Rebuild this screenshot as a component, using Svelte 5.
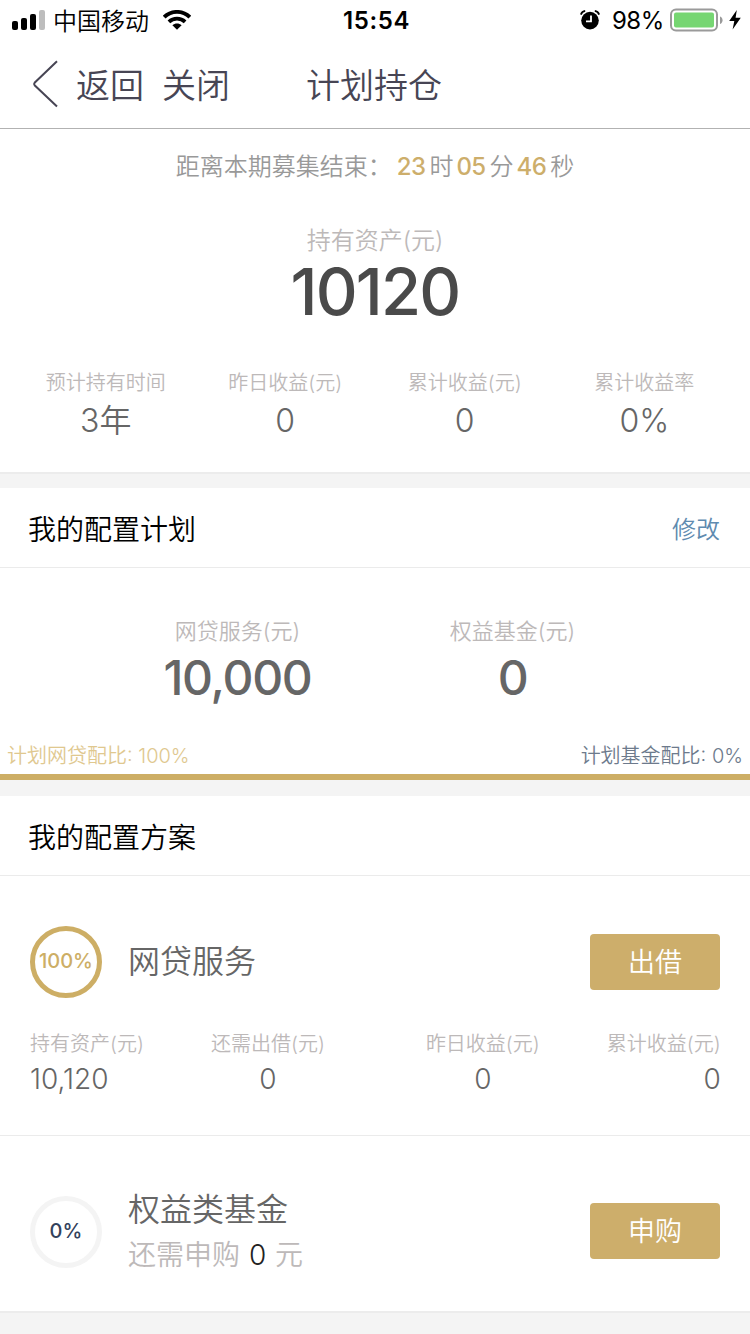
<script>
  const countdown = [
    { value: '23', unit: '时' },
    { value: '05', unit: '分' },
    { value: '46', unit: '秒' }
  ]

  const summary = [
    { label: '预计持有时间', value: '3年' },
    { label: '昨日收益(元)', value: '0' },
    { label: '累计收益(元)', value: '0' },
    { label: '累计收益率', value: '0%' }
  ]

  const plan = [
    { label: '网贷服务(元)', value: '10,000' },
    { label: '权益基金(元)', value: '0' }
  ]

  const loan = [
    { label: '持有资产(元)', value: '10,120' },
    { label: '还需出借(元)', value: '0' },
    { label: '昨日收益(元)', value: '0' },
    { label: '累计收益(元)', value: '0' }
  ]

  let loanRatio = 100
</script>

<div class="page">
  <div class="status">
    <div class="status-left">
      <svg width="34" height="20" viewBox="0 0 34 20">
        <rect x="0" y="11" width="6" height="9" rx="2" />
        <rect x="9" y="8" width="6" height="12" rx="2" />
        <rect x="18" y="4" width="6" height="16" rx="2" />
        <rect x="27" y="0" width="6" height="20" rx="2" fill="#bdbdbd" />
      </svg>
      <span class="carrier">中国移动</span>
      <svg class="wifi" width="28" height="20" viewBox="0 0 28 20">
        <g fill="none" stroke="#000" stroke-width="3.8">
          <path d="M1.2 7.1C8.3 0.1 19.7 0.1 26.8 7.1" />
          <path d="M5.9 11.9C10.4 7.6 17.6 7.6 22.1 11.9" />
        </g>
        <path d="M9.4 15.2C12 13 16 13 18.6 15.2L14 19.8Z" />
      </svg>
    </div>
    <span class="clock">15:54</span>
    <div class="status-right">
      <svg width="20" height="20" viewBox="0 0 20 20">
        <circle cx="10" cy="10.6" r="8.8" />
        <path d="M0.8 4.6C1.6 2.4 3 1.2 5.2 0.9M19.2 4.6C18.4 2.4 17 1.2 14.8 0.9" fill="none" stroke="#000" stroke-width="1.8" />
        <path d="M11 5.5V11.3H6" fill="none" stroke="#fff" stroke-width="1.8" />
      </svg>
      <span class="percent">98%</span>
      <svg class="battery" width="53" height="24" viewBox="0 0 53 24">
        <rect x="1" y="1.5" width="46" height="21" rx="5" fill="none" stroke="#9a9a9a" stroke-width="2" />
        <rect x="4" y="4.5" width="40" height="15" rx="2" fill="#76d672" />
        <path d="M50 8.5C53.4 9.5 53.4 14.9 50 15.9Z" fill="#9a9a9a" />
      </svg>
      <svg class="bolt" width="12" height="20" viewBox="0 0 12 20">
        <path d="M7.8 0L0.2 11H5.3L3.6 19.4L11.8 7.8H6.6Z" />
      </svg>
    </div>
  </div>

  <header class="nav">
    <svg width="27" height="48" viewBox="0 0 27 48">
      <path d="M25 1.2L2.6 22.8Q1.6 24 2.6 25.2L25 46.4" fill="none" stroke="#474554" stroke-width="2" />
    </svg>
    <span class="back">返回</span>
    <span class="close">关闭</span>
    <h1>计划持仓</h1>
  </header>

  <section class="overview">
    <p class="countdown">
      <span class="countdown-label">距离本期募集结束：</span>
      {#each countdown as part}
        <b>{part.value}</b><span class="unit">{part.unit}</span>
      {/each}
    </p>
    <p class="total-label">持有资产(元)</p>
    <p class="total">10120</p>
    <div class="summary">
      {#each summary as item}
        <div>
          <p class="label">{item.label}</p>
          <p class="value">{item.value}</p>
        </div>
      {/each}
    </div>
  </section>

  <section>
    <div class="heading">
      <h2>我的配置计划</h2>
      <span class="edit">修改</span>
    </div>
    <div class="plan">
      {#each plan as item}
        <div>
          <p class="plan-label">{item.label}</p>
          <p class="plan-value">{item.value}</p>
        </div>
      {/each}
    </div>
    <div class="ratio">
      <span class="ratio-loan">计划网贷配比: {loanRatio}%</span>
      <span class="ratio-fund">计划基金配比: {100 - loanRatio}%</span>
    </div>
    <div class="bar"><div class="bar-fill" style:width="{loanRatio}%"></div></div>
  </section>

  <section class="scheme">
    <div class="heading">
      <h2>我的配置方案</h2>
    </div>
    <div class="loan">
      <div class="row">
        <div class="ring full">100%</div>
        <h3>网贷服务</h3>
        <button>出借</button>
      </div>
      <div class="details">
        {#each loan as item}
          <div>
            <p class="label">{item.label}</p>
            <p class="detail-value">{item.value}</p>
          </div>
        {/each}
      </div>
    </div>
    <div class="fund">
      <div class="row">
        <div class="ring">0%</div>
        <div class="fund-text">
          <h3>权益类基金</h3>
          <p>还需申购 <em>0</em> 元</p>
        </div>
        <button>申购</button>
      </div>
    </div>
  </section>
</div>

<style>
  :global(body) {
    background: #f4f4f4;
  }

  .page {
    width: 750px;
    height: 1334px;
    overflow: hidden;
    background: #f4f4f4;
    font-family: Inter, 'Noto Sans CJK SC', sans-serif;
    font-weight: 350;
    color: #666;
  }

  p, h1, h2, h3 {
    margin: 0;
    font-weight: 350;
    white-space: nowrap;
  }

  section {
    background: #fff;
    margin-bottom: 16px;
  }

  .status {
    display: grid;
    grid-template-columns: 1fr auto 1fr;
    align-items: center;
    height: 40px;
    padding: 0 9px 0 12px;
    background: #fff;
    color: #000;
  }

  .status-left, .status-right {
    display: flex;
    align-items: center;
  }

  .status-right {
    justify-content: flex-end;
  }

  .carrier {
    margin-left: 7px;
    padding-top: 3px;
    font-size: 24px;
    line-height: 37px;
  }

  .wifi {
    margin-left: 14px;
  }

  .clock {
    padding-top: 1px;
    font-size: 24px;
    font-weight: 600;
    letter-spacing: 0.6px;
  }

  .percent {
    margin: 0 6px 0 12px;
    padding-top: 1px;
    font-size: 24px;
    font-weight: 400;
    letter-spacing: -0.4px;
  }

  .bolt {
    margin-left: 6px;
  }

  .nav {
    display: flex;
    align-items: center;
    height: 88px;
    padding-left: 32px;
    border-bottom: 1px solid #b2b2b2;
    background: #fff;
    color: #474554;
    font-size: 34px;
    line-height: 84px;
  }

  .nav span, h1 {
    padding-top: 4px;
  }

  .back {
    margin-left: 17px;
  }

  .close {
    margin-left: 18px;
  }

  h1 {
    margin-left: 76px;
    font-size: 34px;
  }

  .overview {
    height: 343px;
    border-bottom: 2px solid #ececec;
    margin-bottom: 14px;
    text-align: center;
  }

  .countdown {
    display: flex;
    justify-content: center;
    padding-top: 20px;
    font-size: 24px;
    line-height: 36px;
    color: #999;
  }

  .countdown-label {
    margin-right: 5px;
  }

  .countdown b {
    font-weight: 500;
    color: #cdae6b;
    letter-spacing: -0.6px;
  }

  .unit {
    margin: 0 3px 0 4px;
  }

  .unit:last-child {
    margin-right: 0;
  }

  .total-label {
    padding-top: 40px;
    font-size: 24px;
    line-height: 32px;
    color: #bdb9b9;
  }

  .total {
    padding-top: 2px;
    font-size: 65px;
    font-weight: 500;
    line-height: 66px;
    letter-spacing: -1.8px;
    color: #4a4a4a;
  }

  .summary {
    display: grid;
    grid-template-columns: repeat(4, 1fr);
    padding: 43px 16px 0;
  }

  .label {
    font-size: 20px;
    line-height: 30px;
    color: #bdb9b9;
  }

  .value {
    font-size: 32px;
    line-height: 46px;
  }

  .heading {
    display: flex;
    justify-content: space-between;
    align-items: center;
    height: 79px;
    padding: 0 30px 0 28px;
    border-bottom: 1px solid #ebebeb;
  }

  h2 {
    font-size: 28px;
    color: #000;
  }

  .edit {
    font-size: 24px;
    color: #5f8bb0;
  }

  .plan {
    display: grid;
    grid-template-columns: 275px 275px;
    justify-content: center;
    height: 171px;
    box-sizing: border-box;
    padding-top: 46px;
    text-align: center;
  }

  .plan-label {
    font-size: 22px;
    line-height: 34px;
    color: #bdb9b9;
  }

  .plan-value {
    padding-top: 1px;
    font-size: 48px;
    font-weight: 500;
    line-height: 58px;
    letter-spacing: -1.3px;
  }

  .ratio {
    display: flex;
    justify-content: space-between;
    height: 35px;
    padding: 0 7px;
    font-size: 20px;
    line-height: 34px;
  }

  .ratio-loan {
    color: #e0c88f;
  }

  .ratio-fund {
    color: #6d7a8c;
  }

  .bar {
    height: 6px;
    background: #f4f4f4;
  }

  .bar-fill {
    height: 6px;
    background: #cdae65;
  }

  .scheme {
    margin-bottom: 0;
    border-bottom: 2px solid #ececec;
  }

  .loan {
    height: 259px;
    border-bottom: 1px solid #ebebeb;
  }

  .row {
    display: flex;
    align-items: center;
    padding: 50px 30px 0;
  }

  .ring {
    width: 72px;
    height: 72px;
    box-sizing: border-box;
    margin-right: 26px;
    border: 5px solid #f4f4f4;
    border-radius: 50%;
    font-size: 20px;
    font-weight: 500;
    line-height: 61px;
    text-align: center;
    color: #33425c;
  }

  .ring.full {
    border-color: #cdae65;
    color: #cdae65;
  }

  h3 {
    font-size: 32px;
    line-height: 48px;
  }

  button {
    width: 130px;
    height: 56px;
    margin-left: auto;
    padding: 2px 0 0;
    border: 0;
    border-radius: 4px;
    background: #cdae6b;
    color: #fff;
    font: inherit;
    font-size: 27px;
    line-height: 54px;
  }

  .details {
    display: flex;
    padding: 31px 30px 0;
    text-align: center;
  }

  .details div + div {
    margin-left: 67px;
  }

  .details div:nth-child(3) {
    margin-left: 101px;
  }

  .details div:first-child {
    text-align: left;
  }

  .details div:last-child {
    text-align: right;
  }

  .detail-value {
    font-size: 28px;
    line-height: 40px;
  }

  .fund {
    height: 175px;
  }

  .fund .ring {
    margin-top: 2px;
  }

  .fund-text p {
    font-size: 28px;
    line-height: 42px;
    color: #bdb9b9;
  }

  em {
    margin: 0 1px;
    font-style: normal;
    color: #222;
  }
</style>
